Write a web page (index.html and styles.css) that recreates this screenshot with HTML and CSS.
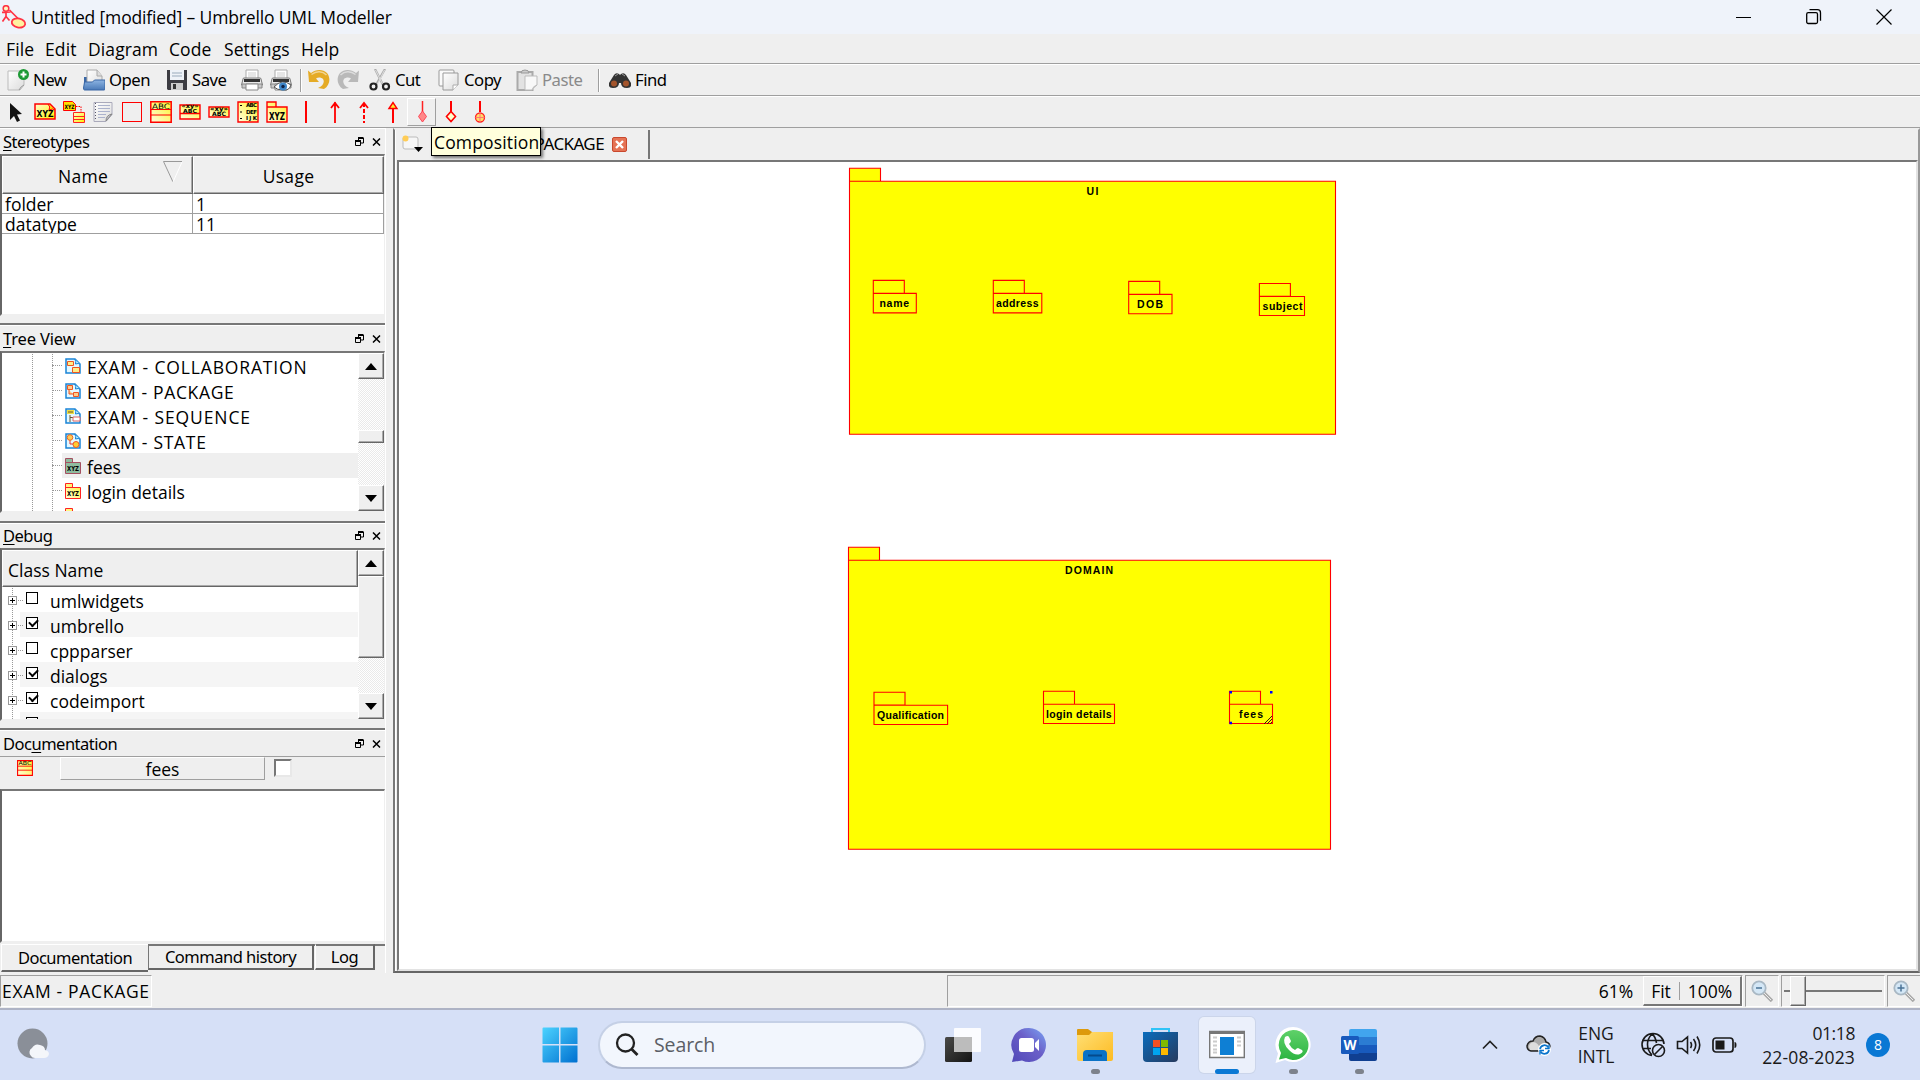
FILE: index.html
```html
<!DOCTYPE html>
<html lang="en">
<head>
<meta charset="utf-8">
<title>Untitled [modified] – Umbrello UML Modeller</title>
<link rel="stylesheet" href="styles.css">
</head>
<body>
<svg class="defs" width="0" height="0" aria-hidden="true">
  <defs>
    <linearGradient id="yel" x1="0" y1="0" x2="1" y2="1"><stop offset="0" stop-color="#fffbd0"/><stop offset="1" stop-color="#fff200"/></linearGradient>
    <linearGradient id="yel2" x1="1" y1="0" x2="0" y2="1"><stop offset="0" stop-color="#fff32a"/><stop offset="1" stop-color="#fffde0"/></linearGradient>
    <linearGradient id="paper" x1="0" y1="0" x2="1" y2="1"><stop offset="0" stop-color="#fff"/><stop offset="1" stop-color="#dcdcdc"/></linearGradient>
    <linearGradient id="blueb" x1="0" y1="0" x2="0" y2="1"><stop offset="0" stop-color="#8db4e2"/><stop offset="1" stop-color="#4a7ab8"/></linearGradient>
    <linearGradient id="win" x1="0" y1="0" x2="1" y2="1"><stop offset="0" stop-color="#4cd3ff"/><stop offset="1" stop-color="#0070d0"/></linearGradient>
    <linearGradient id="chat" x1="1" y1="0" x2="0" y2="1"><stop offset="0" stop-color="#7aa4f4"/><stop offset=".45" stop-color="#6b5fc8"/><stop offset="1" stop-color="#5048b8"/></linearGradient>
    <linearGradient id="fold" x1="0" y1="0" x2="1" y2="1"><stop offset="0" stop-color="#ffdf75"/><stop offset="1" stop-color="#fdbb22"/></linearGradient>
    <linearGradient id="store" x1="0" y1="0" x2="1" y2="1"><stop offset="0" stop-color="#0a6cbd"/><stop offset="1" stop-color="#263a5e"/></linearGradient>
    <linearGradient id="dark" x1="0" y1="0" x2="1" y2="1"><stop offset="0" stop-color="#4a4a48"/><stop offset="1" stop-color="#141414"/></linearGradient>
    <linearGradient id="wa" x1="0" y1="0" x2="0" y2="1"><stop offset="0" stop-color="#5fd169"/><stop offset="1" stop-color="#2db442"/></linearGradient>
    <symbol id="restore" viewBox="0 0 9 9"><path d="M3 .5h5.500M3 1.500h5.500M3.500 1v2M8.500 1v5H6M.5 4v4.500h5V4M0 3.500h6M0 4.500h6" fill="none" stroke="#000"/></symbol>
    <symbol id="cross" viewBox="0 0 9 8"><path d="M1 .5l7 7M8 .5l-7 7" fill="none" stroke="#000" stroke-width="1.500"/></symbol>
    <symbol id="printer" viewBox="0 0 22 22"><path d="M5 1h12v9H5z" fill="#fff" stroke="#aaa"/><path d="M7 3h8v5H7z" fill="#e6e6e6"/><path d="M2 10q0-1 1-1h16q1 0 1 1l1.500 6h-21z" fill="#e8e8e8" stroke="#777"/><path d="M3 10h16v3H3z" fill="#333"/><path d="M1 15h20v4H1z" fill="#c9c9c9" stroke="#888"/><path d="M5 15h12v6H5z" fill="#fff" stroke="#888"/></symbol>
    <symbol id="undo" viewBox="0 0 22 22"><path d="M0 1.500l3 2.500c5-4 12-4 16 0 4 5 3 12-3 16l-6-1c5-2 7-6 5-9-2-2-5-2-7-.5l3 3.500H1z" fill="currentColor"/><path d="M3.500 5.500c5-4 11-3.500 15 .5" fill="none" stroke="#fff" stroke-opacity=".5" stroke-width="1.500"/></symbol>
    <symbol id="pkg" viewBox="0 0 16 16"><path d="M.5.500h7v4h8v11H.5z" fill="url(#yel2)" stroke="#f22"/><path d="M.5 4.500h8" stroke="#f22"/><text x="8" y="13" font-size="7" textLength="12" lengthAdjust="spacingAndGlyphs" text-anchor="middle" class="bold">XYZ</text></symbol>
    <symbol id="sheet" viewBox="0 0 16 16"><path d="M1 1h9l5 5v9H1z" fill="#e4f8ff" stroke="#1a84d6" stroke-width="1.500"/><path d="M9.500 1q2 2 1 5 3-1 4.500 0" fill="#b8ecff" stroke="#1a84d6"/></symbol>
    <symbol id="classi" viewBox="0 0 22 22"><path d="M.8.800h20.400v20.400H.8z" fill="url(#yel2)" stroke="#f00" stroke-width="1.500"/><path d="M1 8.500h20M1 14h20" stroke="#f00" stroke-width="1.200"/><text x="11" y="7.500" font-size="7.500" textLength="18" lengthAdjust="spacingAndGlyphs" text-anchor="middle">ABC</text></symbol>
    <symbol id="loupe" viewBox="0 0 22 22"><path d="M13 13l8 8" stroke="#aaa" stroke-width="3.500"/><path d="M13 13l7 7" stroke="#eee"/><circle cx="8" cy="8" r="6.700" fill="#d4e7f6" stroke="#a9b8c4" stroke-width="1.800"/></symbol>
  </defs>
</svg>

<div class="window">
  <header class="titlebar">
    <svg class="applogo" width="25" height="24" viewBox="0 0 25 24"><circle cx="4" cy="3.500" r="2.800" fill="#fff6c0" stroke="#f34" stroke-width="1.500"/><path d="M4 7v5M-.5 7.500l9-.5M4 11.500l-3.500 5M4 11.500l3.500 4M7.500 5l9 9" fill="none" stroke="#f34" stroke-width="1.700"/><ellipse cx="16.500" cy="18" rx="6.800" ry="4.500" transform="rotate(12 16.500 18)" fill="#fff2a0" stroke="#f34" stroke-width="1.800"/></svg>
    <span class="t-title">Untitled [modified] – Umbrello UML Modeller</span>
    <div class="wincontrols">
      <svg width="16" height="16" viewBox="0 0 16 16"><path d="M0 8.500h15" stroke="#000"/></svg>
      <svg width="16" height="16" viewBox="0 0 16 16"><rect x=".7" y="3.700" width="10.800" height="10.800" rx="1.500" fill="none" stroke="#000" stroke-width="1.300"/><path d="M3.500.700h8q3 0 3 3v8" fill="none" stroke="#000" stroke-width="1.300"/></svg>
      <svg width="16" height="16" viewBox="0 0 16 16"><path d="M.5.500l15 15M15.500.500l-15 15" stroke="#000" stroke-width="1.200"/></svg>
    </div>
  </header>

  <nav class="menubar">
    <span class="m-file">File</span><span class="m-edit">Edit</span><span class="m-diagram">Diagram</span><span class="m-code">Code</span><span class="m-settings">Settings</span><span>Help</span>
  </nav>

  <div class="toolbar">
    <div class="tool b-new"><svg width="22" height="22" viewBox="0 0 22 22"><path d="M1 2h16v14l-4 5H1z" fill="url(#paper)" stroke="#bbb"/><path d="M12 21q2-4 5-5" fill="none" stroke="#999"/><circle cx="16.500" cy="5.500" r="5.500" fill="#1d9a35"/><path d="M16.500 2.500v6M13.500 5.500h6" stroke="#fff" stroke-width="2"/></svg>New</div>
    <div class="tool b-open"><svg width="22" height="22" viewBox="0 0 22 22"><path d="M1 8h6v12H1z" fill="#3a67a5"/><path d="M4 1h10l5 6v10H4z" fill="url(#paper)" stroke="#aaa"/><path d="M14 1v6h5" fill="#ddd" stroke="#aaa"/><path d="M.5 19l1-6h8l2-2h10.500v9q0 1-1 1H1.500q-1 0-1-2z" fill="url(#blueb)" stroke="#3a67a5"/></svg>Open</div>
    <div class="tool b-save"><svg width="22" height="22" viewBox="0 0 22 22"><path d="M1 1h20v20H2l-1-1z" fill="#3c3c42"/><path d="M4 1h14v10H4z" fill="#eef2f8"/><path d="M6 4h10M6 7h10" stroke="#9ab"/><path d="M5 14h12v7H5z" fill="#ccc"/><path d="M7 15h3v5H7z" fill="#333"/></svg>Save</div>
    <div class="tool b-print"><svg width="22" height="22"><use href="#printer"/></svg></div>
    <div class="tool b-preview"><svg width="22" height="22" viewBox="0 0 22 22"><use href="#printer" width="22" height="22"/><path d="M4 18q8-9 17-2-2 6-8 5-6 0-9-3z" fill="#fff" stroke="#555"/><circle cx="13" cy="17.500" r="4" fill="#3e86c8"/><circle cx="13" cy="17.500" r="1.700" fill="#124"/></svg></div>
    <i class="sep"></i>
    <div class="tool b-undo"><svg width="22" height="22"><use href="#undo"/></svg></div>
    <div class="tool b-redo"><svg width="22" height="22"><use href="#undo"/></svg></div>
    <div class="tool b-cut"><svg width="22" height="22" viewBox="0 0 22 22"><path d="M6 0l8 16M16 0L7 16" stroke="#aaa" stroke-width="2.200"/><path d="M6.500 1l7 14M15.500 1l-7 14" stroke="#eee" stroke-width=".8"/><circle cx="4.500" cy="17.500" r="3" fill="none" stroke="#222" stroke-width="2.200"/><circle cx="17" cy="17.500" r="3" fill="none" stroke="#222" stroke-width="2.200"/></svg>Cut</div>
    <div class="tool b-copy"><svg width="22" height="22" viewBox="0 0 22 22"><rect x="1" y="1" width="15" height="16" rx="1" fill="#fafafa" stroke="#999"/><path d="M5 4h15v12l-5 5H5z" fill="url(#paper)" stroke="#999"/><path d="M15 21v-5h5" fill="#fff" stroke="#aaa"/></svg>Copy</div>
    <div class="tool b-paste"><svg width="22" height="22" viewBox="0 0 22 22"><rect x="1.500" y="3" width="15" height="18" fill="#e2e2e2" stroke="#aaa" stroke-width="2"/><path d="M5 4q0-3 4-3t4 3z" fill="#ccc" stroke="#999"/><path d="M9 7h12v9l-5 5H9z" fill="#f8f8f8" stroke="#bbb"/><path d="M16 21q1-4 5-5" fill="#ddd" stroke="#bbb"/></svg>Paste</div>
    <i class="sep"></i>
    <div class="tool b-find"><svg width="22" height="22" viewBox="0 0 22 22"><path d="M0 14L5 6q2-3 5-1l1 1 1-1q3-2 5 1l5 8q1 5-4 5-6 0-6-5h-2q0 5-6 5-5 0-4-5z" fill="#333"/><circle cx="5" cy="14.500" r="3" fill="#a4552c"/><circle cx="17" cy="14.500" r="3" fill="#a4552c"/><path d="M6 7l3-2M13 5l3 2" stroke="#999"/></svg>Find</div>
  </div>

  <div class="palette">
    <b><svg width="22" height="22" viewBox="0 0 22 22"><path d="M5 2l12 11-5 .5 3 6-3 1.500-3-6-4 4z" fill="#111"/></svg></b>
    <b><svg width="22" height="22" viewBox="0 0 22 22"><path d="M1 3h15l5 5v10H1z" fill="url(#yel)" stroke="#f00" stroke-width="1.500"/><path d="M14 3q3 3 1 6 4-2 6 0" fill="#fd0" stroke="#f00"/><text x="11" y="15.500" font-size="8.500" textLength="17" lengthAdjust="spacingAndGlyphs" text-anchor="middle" class="bold">XYZ</text></svg></b>
    <b><svg width="22" height="22" viewBox="0 0 22 22"><path d="M.5.500h9l3 3v6H.5z" fill="#fd0" stroke="#f00"/><text x="6.500" y="8" font-size="6" textLength="10" lengthAdjust="spacingAndGlyphs" text-anchor="middle" class="bold">XYZ</text><path d="M13 5.500h5v6" fill="none" stroke="#f00" stroke-dasharray="1.500 1"/><path d="M10.500 11.500h11v10h-11zM10.500 15.500h11M10.500 18.500h11" fill="url(#yel)" stroke="#f22"/></svg></b>
    <b><svg width="22" height="22" viewBox="0 0 22 22"><path d="M2 1.500h18v12l-6 7H2z" fill="url(#paper)" stroke="#aab"/><path d="M14 20q0-6 6-7z" fill="#c4c4cc" stroke="#888"/><path d="M6 4.500h12M6 7.500h12M6 10.500h12M6 13.500h8M6 16.500h7" stroke="#abb2cc"/><path d="M3.500 2v18" stroke="#556" stroke-dasharray="1 2"/></svg></b>
    <b><svg width="22" height="22" viewBox="0 0 22 22"><rect x="1.500" y="1.500" width="19" height="19" fill="none" stroke="#f00"/></svg></b>
    <b><svg width="22" height="22"><use href="#classi"/></svg></b>
    <b><svg width="22" height="22" viewBox="0 0 22 22"><path d="M1 4h20v14H1zM1 12.500h20" fill="url(#yel2)" stroke="#f00" stroke-width="1.400"/><text x="11" y="7" font-size="6" textLength="17" lengthAdjust="spacingAndGlyphs" text-anchor="middle" class="bold">«xy»</text><text x="11" y="11.500" font-size="5.500" textLength="14" lengthAdjust="spacingAndGlyphs" text-anchor="middle" class="bold">ABC</text></svg></b>
    <b><svg width="22" height="22" viewBox="0 0 22 22"><path d="M1 6h20v10H1z" fill="url(#yel2)" stroke="#f00" stroke-width="1.400"/><text x="11" y="9.500" font-size="6.500" textLength="18" lengthAdjust="spacingAndGlyphs" text-anchor="middle" class="bold">«xy»</text><text x="11" y="15" font-size="6" textLength="14" lengthAdjust="spacingAndGlyphs" text-anchor="middle" class="bold">ABC</text></svg></b>
    <b><svg width="22" height="22" viewBox="0 0 22 22"><path d="M1 1h20v20H1z" fill="url(#yel2)" stroke="#f00" stroke-width="1.400"/><g font-size="5.500" class="mono"><text x="9" y="6" textLength="11">ABC</text><text x="9" y="12.500" textLength="11">DEF</text><text x="9" y="19" textLength="11">IJK</text></g><path d="M3 4.500h2M3 11h2M3 17.500h2" stroke="#000"/></svg></b>
    <b><svg width="22" height="22" viewBox="0 0 22 22"><path d="M1 1h9v5h11v15H1zM1 6h9" fill="url(#yel2)" stroke="#f00" stroke-width="1.400"/><text x="11" y="18.500" font-size="10" textLength="16" lengthAdjust="spacingAndGlyphs" text-anchor="middle" class="bold">XYZ</text></svg></b>
    <b><svg width="22" height="22" viewBox="0 0 22 22"><path d="M11 0v22" stroke="#f00" stroke-width="2"/></svg></b>
    <b><svg width="22" height="22" viewBox="0 0 22 22"><path d="M11 1v21M7 7l4-5 4 5" fill="none" stroke="#f00" stroke-width="1.800"/></svg></b>
    <b><svg width="22" height="22" viewBox="0 0 22 22"><path d="M11 2v20" stroke="#f00" stroke-width="2" stroke-dasharray="4 2"/><path d="M7 7l4-5 4 5" fill="none" stroke="#f00" stroke-width="1.800"/></svg></b>
    <b><svg width="22" height="22" viewBox="0 0 22 22"><path d="M11 7v15" stroke="#f00" stroke-width="2"/><path d="M7 7.500l4-6 4 6z" fill="#fe3" stroke="#f00" stroke-width="1.400"/></svg></b>
    <b class="hover"><svg width="22" height="22" viewBox="0 0 22 22"><path d="M11.500 0v11" stroke="#f22" stroke-width="1.500"/><path d="M11.500 10l4 5.500-4 5.500-4-5.500z" fill="#f88" stroke="#f45"/></svg></b>
    <b><svg width="22" height="22" viewBox="0 0 22 22"><path d="M11 0v11" stroke="#f00" stroke-width="2"/><path d="M11 10.500l4.500 5-4.500 5-4.500-5z" fill="#ffc" stroke="#f00" stroke-width="1.600"/></svg></b>
    <b><svg width="22" height="22" viewBox="0 0 22 22"><path d="M11 0v11" stroke="#f00" stroke-width="2"/><circle cx="11" cy="16.500" r="4.500" fill="#fd6" stroke="#f22" stroke-width="1.300"/><path d="M11 12v9M6.500 16.500h9" stroke="#f77"/></svg></b>
  </div>

  <main class="workspace">
    <aside class="docks">
      <section class="dock d-stereo">
        <h2><span><u>S</u>tereotypes</span><svg width="9" height="9"><use href="#restore"/></svg><svg width="9" height="8"><use href="#cross"/></svg></h2>
        <div class="frame">
          <div class="grid">
            <div class="hcell name">Name<svg width="20" height="22" viewBox="0 0 20 22"><path d="M19 .5H.5L10 21" fill="none" stroke="#999"/><path d="M19 1L10 21" stroke="#fff"/></svg></div><div class="hcell">Usage</div>
            <div class="cell">folder</div><div class="cell">1</div>
            <div class="cell">datatype</div><div class="cell">11</div>
          </div>
        </div>
      </section>
      <section class="dock d-tree">
        <h2><span class="ls-tree"><u>T</u>ree View</span><svg width="9" height="9"><use href="#restore"/></svg><svg width="9" height="8"><use href="#cross"/></svg></h2>
        <div class="frame split">
          <ul class="tree">
            <li><svg width="16" height="16"><use href="#sheet"/><path d="M2.500 3.500h6v4h-6zM7.500 9.500h7v5h-7z" fill="#fe8" stroke="#e52"/></svg><span class="caps1">EXAM - COLLABORATION</span></li>
            <li><svg width="16" height="16"><use href="#sheet"/><path d="M2.500 2.500h5v4h-5zM8.500 9.500h5v4h-5zM4 7v4h4" fill="#fc8" stroke="#e52"/></svg><span class="caps2">EXAM - PACKAGE</span></li>
            <li><svg width="16" height="16"><use href="#sheet"/><path d="M2 2h7v4H2z" fill="#ed4"/><path d="M3 4h5M5 7v7M5 9.500h4" stroke="#653" fill="none"/><path d="M8 9h7v4H8z" fill="#fff" stroke="#d66"/></svg><span class="caps3">EXAM - SEQUENCE</span></li>
            <li><svg width="16" height="16"><use href="#sheet"/><path d="M5 6v5h4" fill="none" stroke="#d33"/><circle cx="5" cy="4.500" r="2.800" fill="#fc5" stroke="#e62"/><circle cx="11" cy="11.500" r="3" fill="#fc3" stroke="#e52"/></svg><span class="caps4">EXAM - STATE</span></li>
            <li class="current"><svg width="16" height="16" viewBox="0 0 16 16"><path d="M.5.500h7v4h8v11H.5z" fill="#8fbc9f" stroke="#a45060"/><path d="M.5 4.500h8" stroke="#a45060"/><text x="8" y="13" font-size="7" textLength="12" lengthAdjust="spacingAndGlyphs" text-anchor="middle" class="bold">XYZ</text></svg><span>fees</span></li>
            <li><svg width="16" height="16"><use href="#pkg"/></svg><span>login details</span></li>
            <li><svg width="16" height="16"><use href="#pkg"/></svg><span></span></li>
          </ul>
          <div class="scroll"><i class="up"></i><i class="thumb small"></i><i class="down"></i></div>
        </div>
      </section>
      <section class="dock d-debug">
        <h2><span><u>D</u>ebug</span><svg width="9" height="9"><use href="#restore"/></svg><svg width="9" height="8"><use href="#cross"/></svg></h2>
        <div class="frame split">
          <div class="debuglist">
            <div class="hcell left">Class Name</div>
            <ul class="checks">
              <li><i class="plus"></i><i class="box"></i>umlwidgets</li>
              <li><i class="plus"></i><i class="box on"></i>umbrello</li>
              <li><i class="plus"></i><i class="box"></i>cppparser</li>
              <li><i class="plus"></i><i class="box on"></i>dialogs</li>
              <li><i class="plus"></i><i class="box on"></i>codeimport</li>
              <li><i class="plus"></i><i class="box"></i></li>
            </ul>
          </div>
          <div class="scroll"><i class="up"></i><i class="thumb large"></i><i class="down"></i></div>
        </div>
      </section>
      <section class="dock d-doc">
        <h2><span>Doc<u>u</u>mentation</span><svg width="9" height="9"><use href="#restore"/></svg><svg width="9" height="8"><use href="#cross"/></svg></h2>
        <div class="docrow"><svg width="16" height="16"><use href="#classi"/></svg><div class="docname">fees</div><i class="doccheck"></i></div>
        <div class="frame"></div>
        <div class="tabs"><div class="tab active">Documentation</div><div class="tab cmd">Command history</div><div class="tab log">Log</div></div>
      </section>
    </aside>

    <section class="editor">
      <div class="tabbar">
        <svg class="newtab" width="22" height="18" viewBox="0 0 22 18"><path d="M3 2h11q2 0 2 2v8q0 2-2 2H3q-2 0-2-2V4q0-2 2-2z" fill="#f6f6f6" stroke="#bbb"/><circle cx="3.500" cy="3.500" r="3" fill="#fc5"/><path d="M12 12h9l-4.500 5z" fill="#000"/></svg>
        <div class="doctab"><span class="tablabel">EXAM - PACKAGE</span><svg width="15" height="15" viewBox="0 0 15 15"><rect x=".5" y=".5" width="14" height="14" rx="1.500" fill="#e57355" stroke="#c9482d"/><path d="M4 4l7 7M11 4l-7 7" stroke="#fff" stroke-width="2.400"/></svg></div>
        <div class="tooltip">Composition</div>
      </div>
      <div class="canvas">
        <svg width="1518" height="808" viewBox="399 162 1518 808">
          <g fill="#ff0" stroke="#f00" stroke-width="1.100">
            <path d="M849.500 168.300h31v13h455v253h-486zM849.500 181.300h31"/>
            <path d="M848.500 547.300h31v13h451v289h-482zM848.500 560.300h31"/>
            <path d="M873.300 280.400h31v13h12v19.500h-43zM873.300 293.400h31"/>
            <path d="M993.300 280.400h31v13h17.500v19.500h-48.500zM993.300 293.400h31"/>
            <path d="M1128.700 281.400h31v13h12.300v19.300h-43.300zM1128.700 294.400h31"/>
            <path d="M1259.400 283.500h31v13h14.100v19h-45.100zM1259.400 296.400h31"/>
            <path d="M874 692.300h31v13h42.600v19.200h-73.600zM874 705.100h31"/>
            <path d="M1043.500 691.200h31v13h40v19.300h-71zM1043.500 704.200h31"/>
            <path d="M1229.500 691.200h31v13h12v19.300h-43zM1229.500 704.200h31"/>
          </g>
          <g class="nodetext">
            <text x="1086.500" y="195" textLength="12">UI</text>
            <text x="1065" y="574" textLength="48">DOMAIN</text>
            <text x="879.500" y="307" textLength="29.500">name</text>
            <text x="996" y="307" textLength="42.500">address</text>
            <text x="1137" y="308" textLength="26">DOB</text>
            <text x="1262.500" y="310" textLength="40">subject</text>
            <text x="877" y="719" textLength="67">Qualification</text>
            <text x="1046" y="718" textLength="65.500">login details</text>
            <text x="1239" y="718" textLength="24">fees</text>
          </g>
          <path d="M1229.500 691h2.500v2.500h-2.500zM1270 691h2.500v2.500h-2.500zM1229.500 721.700h2.500v2.500h-2.500z" fill="#00f"/>
          <path d="M1264 724l8-8M1267 724l5-5M1270 724l2-2" stroke="#321" stroke-width="1"/>
        </svg>
      </div>
    </section>
  </main>

  <footer class="statusbar">
    <div class="st-name">EXAM - PACKAGE</div>
    <div class="st-main"><span class="pct">61%</span><div class="fit"><span>Fit</span><i></i><span>100%</span></div></div>
    <div class="st-zoom"><svg width="22" height="22" viewBox="0 0 22 22"><use href="#loupe" width="22" height="22"/><path d="M5 8h6" stroke="#4a7396" stroke-width="1.500"/></svg></div>
    <div class="st-slider"><i></i></div>
    <div class="st-zoom last"><svg width="22" height="22" viewBox="0 0 22 22"><use href="#loupe" width="22" height="22"/><path d="M4.500 8h7M8 4.500v7" stroke="#4a7396" stroke-width="1.500"/></svg></div>
  </footer>
</div>

<div class="taskbar">
  <svg class="weather" width="34" height="34" viewBox="0 0 34 34"><circle cx="15.500" cy="15.500" r="15" fill="#8a8f98"/><path d="M4 6A15 15 0 0 0 22 29 15 15 0 0 1 4 6z" fill="#6c7078"/><path d="M14 28a5 5 0 0 1 1-8q3-5 8-3 5 1 5 5 4 1 4 4-1 4-5 4H18q-3 0-4-2z" fill="#f4f6fa"/></svg>
  <div class="apps">
    <svg width="36" height="36" viewBox="0 0 36 36"><path d="M.5 1.500q0-1 1-1H17V17H.5zM18.500.500h16q1 0 1 1V17h-17zM.5 18.500H17v17H1.500q-1 0-1-1zM18.500 18.500h17v16q0 1-1 1h-16z" fill="url(#win)"/></svg>
    <div class="search"><svg width="24" height="24" viewBox="0 0 24 24"><circle cx="10.500" cy="10" r="8.500" fill="none" stroke="#222" stroke-width="2.300"/><path d="M16.500 16l6 6" stroke="#222" stroke-width="2.800"/></svg><span>Search</span></div>
    <div class="app"><svg width="36" height="36" viewBox="0 0 36 36"><rect y="10" width="27" height="25" rx="1.500" fill="url(#dark)"/><rect x="9" y="1" width="27" height="24" rx="1" fill="#fff" fill-opacity=".9"/><path d="M9 10h18v15H9z" fill="#bcbcbc"/></svg></div>
    <div class="app"><svg width="36" height="36" viewBox="0 0 36 36"><path d="M18 1a17 17 0 1 1-7 32.500L1 35l2-8A17 17 0 0 1 18 1z" fill="url(#chat)"/><rect x="8" y="11" width="15" height="14" rx="2.500" fill="#fff"/><path d="M24 16l4-4v12l-4-4z" fill="#fff"/></svg></div>
    <div class="app"><svg width="36" height="36" viewBox="0 0 36 36"><path d="M0 3q0-1 1-1h10l4 3v5H0z" fill="#dd9a0c"/><path d="M0 8h12l3-3h21v27q0 2-2 2H2q-2 0-2-2z" fill="url(#fold)"/><path d="M6 34v-7q0-4 4-4h16q4 0 4 4v7z" fill="#0b72c6"/><path d="M11 28.500h14" stroke="#054a8c" stroke-width="2"/></svg><i class="dot"></i></div>
    <div class="app"><svg width="36" height="36" viewBox="0 0 36 36"><path d="M9 6V2h17v4" fill="none" stroke="#2fc3f7" stroke-width="2"/><path d="M0 5h35v26q0 4-4 4H4q-4 0-4-4z" fill="url(#store)"/><path d="M10 13h7v7h-7z" fill="#f25022"/><path d="M18 13h7v7h-7z" fill="#7fba00"/><path d="M10 21h7v7h-7z" fill="#00a4ef"/><path d="M18 21h7v7h-7z" fill="#ffb900"/></svg></div>
    <div class="app running"><svg width="36" height="36" viewBox="0 0 36 36"><path d="M.7 4.500h34.600v26H.7z" fill="#fff" stroke="#777" stroke-width="1.400"/><path d="M0 4h36v3H0z" fill="#777"/><path d="M11 10h14v18H11z" fill="#0e7fd4"/><path d="M4 10.500h4M4 14.500h4M4 18.500h4M4 22.500h4M4 25.500h4M28 10.500h4M28 14.500h4M28 18.500h4" stroke="#ccc" stroke-width="2"/></svg><i class="dot"></i></div>
    <div class="app"><svg width="36" height="36" viewBox="0 0 36 36"><path d="M18 0a17.500 17.500 0 1 1-8 33L.5 36 3 26.500A17.500 17.500 0 0 1 18 0z" fill="#fff"/><path d="M18 3a15 15 0 1 1-7 28L4 32.500 6 26A15 15 0 0 1 18 3z" fill="url(#wa)"/><path d="M10 10q3-2 4 0l2 4q0 1-2 3 2 4 6 6 2-2 3-2l4 2q2 2-2 4-5 2-11-4-7-7-4-13z" fill="#fff"/></svg><i class="dot"></i></div>
    <div class="app"><svg width="36" height="36" viewBox="0 0 36 36"><path d="M8 4q0-2 2-2h24q2 0 2 2v6H8z" fill="#41a5ee"/><path d="M8 10h28v8H8z" fill="#2b7cd3"/><path d="M8 18h28v8H8z" fill="#185abd"/><path d="M8 26h28v6q0 2-2 2H10q-2 0-2-2z" fill="#103f91"/><rect y="9" width="18" height="18" rx="1.500" fill="#185abd"/><text x="9" y="23" font-size="13.500" text-anchor="middle" class="bold white">W</text></svg><i class="dot"></i></div>
  </div>
  <div class="tray">
    <svg class="chev" width="16" height="10" viewBox="0 0 16 10"><path d="M1 8.500l7-7 7 7" fill="none" stroke="#222" stroke-width="1.700"/></svg>
    <svg class="cloud" width="26" height="22" viewBox="0 0 26 22"><path d="M5 17q-4-1-4-5 1-5 6-5 2-5 7-5 5 1 6 6 4 1 4 5-1 4-4 4z" fill="#aaa" stroke="#222" stroke-width="1.500"/><path d="M4 16q-3-6 3-8 5 0 8 8z" fill="#ddd"/><circle cx="18.500" cy="15.500" r="6.500" fill="#fff"/><path d="M14 15a4.600 4.600 0 0 1 8.500-1.500M23 16a4.600 4.600 0 0 1-8.500 1.500" fill="none" stroke="#0a74cc" stroke-width="1.700"/><path d="M23 10.500v4h-4M14 20.500v-4h4" fill="none" stroke="#0a74cc" stroke-width="1.400"/></svg>
    <div class="lang"><span>ENG</span><span>INTL</span></div>
    <svg class="globe" width="26" height="26" viewBox="0 0 26 26"><g fill="none" stroke="#1a1a1a" stroke-width="1.600"><path d="M12 23.500A11 11 0 1 1 24 12M2 8.500h21M2 16.500h9M12 23c-6-6-6-15 0-21M12 2c3 2 4 6 4.500 9"/><circle cx="18.500" cy="18.500" r="6"/><path d="M14.500 22.500l8-8"/></g></svg>
    <svg class="speaker" width="26" height="22" viewBox="0 0 26 22"><path d="M1.500 7.500H6L11.500 3v16L6 14.500H1.500zM14.500 8q2 3 0 6M17.500 5q4.500 6 0 12M21 2.500q5.500 8.500 0 17" fill="none" stroke="#1a1a1a" stroke-width="1.600"/></svg>
    <svg class="battery" width="26" height="18" viewBox="0 0 26 18"><rect x="1" y="2" width="20" height="14" rx="3" fill="none" stroke="#1a1a1a" stroke-width="1.700"/><rect x="3.500" y="4.500" width="9" height="9" fill="#1a1a1a"/><path d="M22.500 6v6q2 0 2-3t-2-3z" fill="#1a1a1a"/></svg>
    <div class="clock"><span>01:18</span><span class="date">22-08-2023</span></div>
    <div class="badge">8</div>
  </div>
</div>
</body>
</html>
```
FILE: styles.css
```css
* { box-sizing: border-box; }
body { margin: 0; width: 1920px; height: 1080px; overflow: hidden; background: #efefef; color: #000; font: 17.5px/24px "Open Sans", "Noto Sans", sans-serif; display: flex; flex-direction: column; }
svg { display: block; flex: none; }
svg text { font-family: "DejaVu Sans", sans-serif; }
svg .bold { font-weight: bold; }
svg .white { fill: #fff; font-family: "Open Sans", sans-serif; }
svg .mono { font-family: "DejaVu Sans Mono", monospace; font-weight: bold; }
.defs { position: absolute; }
h2, ul { margin: 0; padding: 0; list-style: none; font-weight: normal; }
i { font-style: normal; }
u { text-underline-offset: 2px; text-decoration-thickness: 1px; }

.window { height: 1010px; display: flex; flex-direction: column; white-space: nowrap; }
.titlebar { height: 34px; background: #eff3fa; display: flex; align-items: center; padding: 0 28px 0 2px; gap: 4px; }
.t-title { letter-spacing: -0.15px; }
.wincontrols { margin-left: auto; display: flex; gap: 54px; }
.menubar { height: 30px; padding: 3px 0 0 6px; display: flex; border-bottom: 1px solid #9f9f9f; }
.menubar span { letter-spacing: 0.1px; }
.m-file { width: 39px; }
.m-edit { width: 43px; }
.m-diagram { width: 81px; }
.m-code { width: 55px; }
.m-settings { width: 77px; }

.toolbar { height: 32px; border-top: 1px solid #fff; border-bottom: 1px solid #9f9f9f; padding-left: 7px; display: flex; align-items: center; font-family: "Noto Sans", sans-serif; font-size: 16.7px; letter-spacing: -0.5px; }
.tool { display: flex; align-items: center; gap: 4px; }
.b-new { width: 76px; }
.b-open { width: 83px; }
.b-save { width: 75px; }
.b-print { width: 29px; }
.b-preview { width: 30px; }
.sep { width: 1px; height: 23px; background: #9f9f9f; box-shadow: 1px 0 #fff; }
.b-undo { width: 36px; padding-left: 7px; color: #e5ab26; }
.b-redo { width: 32px; color: #b9b9b9; }
.b-redo svg { transform: scaleX(-1); }
.b-cut { width: 69px; }
.b-copy { width: 78px; }
.b-paste { width: 82px; color: #8a8a8a; }
.b-find { padding-left: 10px; }
.palette { height: 32px; border-top: 1px solid #fff; border-bottom: 1px solid #9f9f9f; padding-left: 1px; display: flex; align-items: center; }
.palette b { width: 29px; height: 28px; display: flex; align-items: center; justify-content: center; font-weight: normal; }
.palette .hover { border: 1px solid #9f9f9f; border-color: #fff #9f9f9f #9f9f9f #fff; }

.workspace { height: 846px; display: flex; }
.docks { width: 386px; height: 845px; display: flex; flex-direction: column; border-right: 1px solid #fff; }
.dock { display: flex; flex-direction: column; border-top: 1px solid #fff; }
.dock + .dock { border-top: 2px solid #777; box-shadow: inset 0 1px #fff; }
.dock h2 { height: 25px; flex: none; font: 16.5px/24px "Noto Sans", sans-serif; letter-spacing: -0.5px; padding: 0 4px 0 3px; display: flex; align-items: center; gap: 8px; }
.dock h2 span { flex: 1; padding-top: 1px; }
.dock h2 .ls-tree { letter-spacing: -0.15px; }
.frame { flex: 1; min-height: 0; background: #fff; border: 2px solid; border-color: #777 #efefef #efefef #666; border-right-width: 1px; overflow: hidden; }
.d-stereo { height: 195px; padding-bottom: 7px; }
.d-tree { height: 198px; padding-bottom: 8px; }
.d-debug { height: 207px; padding-bottom: 7px; }
.d-doc { height: 245px; }
.d-tree h2, .d-doc h2 { height: 26px; padding-top: 1px; }
.grid { display: grid; grid-template-columns: 191px 191px; grid-template-rows: 38px 20px 20px; }
.hcell { background: #efefef; border: 1px solid; border-color: #fff #666 #666 #fff; box-shadow: inset -1px -1px #aaa; display: flex; align-items: center; justify-content: center; padding-top: 1px; letter-spacing: .3px; }
.hcell.name { padding-left: 55px; justify-content: flex-start; }
.hcell svg { margin: -8px 0 0 55px; }
.cell { border-right: 1px solid #9f9f9f; border-bottom: 1px solid #9f9f9f; padding-left: 3px; line-height: 20px; overflow: hidden; }
.split { display: flex; }
.tree { flex: 1; overflow: hidden; background: repeating-linear-gradient(0deg, #999 0 1px, transparent 1px 2px) 30px 0 / 1px 100% no-repeat, repeating-linear-gradient(0deg, #999 0 1px, transparent 1px 2px) 50px 0 / 1px 100% no-repeat, #fff; }
.tree li { height: 25px; margin-left: 60px; padding-left: 3px; display: flex; align-items: center; gap: 6px; }
.tree li::before { content: ""; width: 10px; margin-left: -13px; margin-right: -3px; border-top: 1px dotted #999; }
.tree li span { padding-top: 3px; }
.tree .current { background: #efefef; }
.caps1 { letter-spacing: .86px; }
.caps2 { letter-spacing: .66px; }
.caps3 { letter-spacing: .88px; }
.caps4 { letter-spacing: .72px; }
.scroll { width: 26px; flex: none; display: flex; flex-direction: column; background: repeating-conic-gradient(#fff 0 25%, #eaeaea 0 50%) 0 0 / 2px 2px; }
.scroll i { background: #efefef; border: 1px solid; border-color: #fff #666 #666 #fff; box-shadow: inset -1px -1px #aaa; }
.up, .down { height: 26px; display: flex; align-items: center; justify-content: center; }
.up::before { content: ""; border: 6.5px solid transparent; border-top: 0; border-bottom: 7px solid #000; }
.down::before { content: ""; border: 6.5px solid transparent; border-bottom: 0; border-top: 7px solid #000; }
.small { height: 13px; margin-top: 51px; }
.large { height: 82px; }
.down { margin-top: auto; }
.debuglist { flex: 1; display: flex; flex-direction: column; overflow: hidden; }
.hcell.left { height: 37px; flex: none; justify-content: flex-start; padding-left: 5px; letter-spacing: 0; padding-top: 3px; }
.checks { background: repeating-linear-gradient(0deg, #999 0 1px, transparent 1px 2px) 10px 0 / 1px 150px no-repeat; }
.checks li { height: 25px; padding-left: 6px; display: flex; align-items: center; padding-top: 3px; }
.checks li:nth-child(even) { background: linear-gradient(#f5f5f5, #f5f5f5) 18px 0 no-repeat; }
.plus { width: 9px; height: 9px; border: 1px solid #999; background: linear-gradient(#000, #000) center / 5px 1px no-repeat, linear-gradient(#000, #000) center / 1px 5px no-repeat, #fff; margin-top: -1px; position: relative; }
.plus::after { content: ""; position: absolute; left: 9px; top: 3px; width: 5px; border-top: 1px dotted #999; }
.box { width: 12px; height: 12px; border: 1px solid #000; background: #fff; margin: -6px 12px 0 9px; }
.on::before { content: ""; display: block; width: 7px; height: 4px; margin: 1px 0 0 1.500px; border: 2px solid #000; border-width: 0 0 2px 2px; transform: rotate(-45deg); }
.docrow { height: 33px; flex: none; border-top: 1px solid #9f9f9f; display: flex; align-items: flex-start; padding-left: 17px; }
.docrow svg { margin-top: 3px; }
.docname { width: 205px; height: 23px; margin-left: 27px; text-align: center; line-height: 23px; border: 1px solid; border-color: #fff #9f9f9f #9f9f9f #fff; }
.doccheck { width: 18px; height: 18px; margin: 2px 0 0 9px; background: #fff; border: 2px solid; border-color: #777 #e8e8e8 #e8e8e8 #777; }
.tabs { height: 29px; flex: none; display: flex; align-items: flex-start; font: 16.5px/24px "Noto Sans", sans-serif; letter-spacing: -0.5px; margin-top: 1px; background: linear-gradient(#777, #777) 147px 0 / 240px 2px no-repeat; }
.tab { height: 26px; border: 1px solid; border-color: #777 #666 #666 #fff; border-width: 1px 2px 2px 1px; display: flex; align-items: center; justify-content: center; padding-top: 1px; }
.tab.active { width: 147px; height: 28px; margin-left: 1px; border-right: 0; border-top-color: #fff; background: #efefef; }
.cmd { width: 166px; border-left-color: #777; }
.log { width: 60px; margin-left: 1px; }

.editor { margin-left: 7px; width: 1527px; height: 845px; border: 2px solid; border-color: transparent #999 #666 #777; padding: 0 0 0 2px; display: flex; flex-direction: column; box-shadow: inset 1px 0 #fff; }
.tabbar { height: 30px; display: flex; align-items: flex-start; position: relative; }
.newtab { margin: 5px 0 0 5px; }
.doctab { width: 225px; height: 29px; margin-left: 1px; border-right: 2px solid #777; display: flex; justify-content: flex-end; align-items: center; gap: 8px; padding-right: 21px; padding-bottom: 1px; }
.tablabel { font: 17px/24px "Noto Sans", sans-serif; letter-spacing: -0.6px; }
.tooltip { position: absolute; left: 34px; top: -3px; width: 110px; height: 29px; background: #ffffdc; border: 1px solid #000; padding-left: 2px; line-height: 28px; box-shadow: 2px 2px 3px #0008; letter-spacing: .15px; }
.canvas { flex: 1; border: 2px solid; border-color: #777 #e3e3e3 #e3e3e3 #777; background: #fff; overflow: hidden; }
.nodetext text { font: bold 10.5px "Liberation Sans", Arial, sans-serif; }

.statusbar { height: 36px; padding-top: 1px; border-bottom: 2px solid #aeb3c5; display: flex; }
.statusbar > div { height: 32px; border: 1px solid; border-color: #9f9f9f #fff #fff #9f9f9f; display: flex; align-items: center; }
.statusbar .st-name { width: 152px; padding-left: 1px; letter-spacing: .68px; }
.statusbar .st-main { margin-left: 795px; width: 797px; justify-content: flex-end; }
.pct { margin-right: 10px; }
.fit { width: 99px; height: 30px; border: 2px solid; border-color: #fff #777 #777 #fff; border-width: 1px 2px 2px 1px; display: flex; align-items: center; padding-left: 7px; }
.fit i { width: 1px; height: 18px; background: #9f9f9f; margin: 0 8px; }
.statusbar .st-zoom { width: 34px; margin-left: 2px; padding-left: 5px; }
.statusbar .st-slider { width: 104px; margin-left: 2px; padding-left: 8px; background: linear-gradient(#777, #777) 2px 14px / 98px 2px no-repeat; }
.st-slider i { width: 16px; height: 30px; background: #efefef; border: 1px solid; border-color: #fff #666 #666 #fff; box-shadow: inset -1px -1px #aaa; }
.statusbar .last { width: 33px; border-right: 0; }

.taskbar { height: 70px; background: #d6e0f7; display: flex; align-items: center; }
.weather { margin-left: 17px; }
.apps { margin-left: 491px; display: flex; align-items: center; }
.search { width: 328px; height: 48px; margin-left: 20px; background: #f2f6fd; border: 2px solid #c5d0e6; border-bottom-color: #aeb8cf; border-radius: 24px; display: flex; align-items: center; padding-left: 15px; gap: 15px; font-size: 19.5px; color: #5b5e66; letter-spacing: -0.1px; }
.app { width: 56px; height: 56px; margin-left: 10px; display: flex; justify-content: center; align-items: center; position: relative; }
.search + .app { margin-left: 9px; }
.running { background: #ebf0fb; border-radius: 5px; box-shadow: 0 0 0 1px #cbd5ea; }
.dot { position: absolute; left: 24px; bottom: -1px; width: 9px; height: 5px; border-radius: 3px; background: #7d828c; }
.running .dot { left: 16px; width: 24px; background: #0a78d4; }
.tray { margin-left: auto; display: flex; align-items: center; font-size: 17.5px; color: #1a1a1a; }
.chev { margin-right: 28px; }
.cloud { margin-right: 23px; }
.lang { width: 42px; display: flex; flex-direction: column; align-items: center; line-height: 23px; letter-spacing: -0.1px; margin-right: 23px; }
.globe { margin-right: 10px; }
.speaker { margin-right: 10px; }
.battery { margin-right: 20px; }
.clock { width: 97px; display: flex; flex-direction: column; align-items: flex-end; line-height: 24px; letter-spacing: -0.4px; margin-right: 11px; }
.date { letter-spacing: .15px; }
.badge { width: 24px; height: 24px; border-radius: 12px; background: #0a78d4; color: #fff; font-size: 14px; display: flex; align-items: center; justify-content: center; margin-right: 30px; }
```
